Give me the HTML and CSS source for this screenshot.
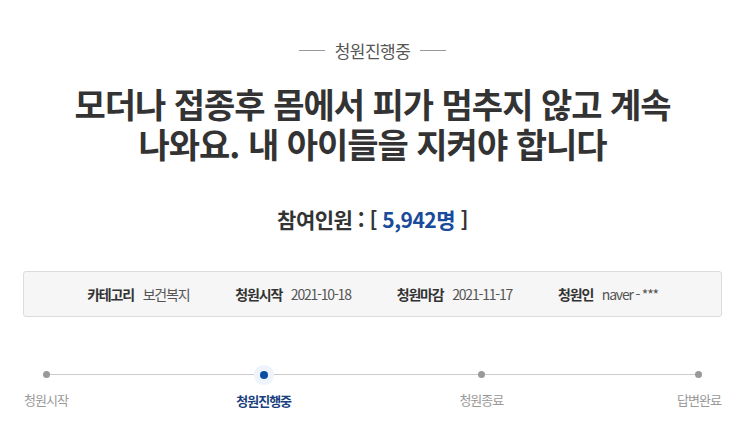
FILE: index.html
```html
<!DOCTYPE html>
<html lang="ko">
<head>
  <meta charset="UTF-8">
  <meta name="viewport" content="width=device-width, initial-scale=1.0">
  <title>청원진행중</title>
  <link rel="stylesheet" href="styles.css">
</head>
<body>
  <div class="petition">
    <!-- Status header -->
    <div class="status">
      <span class="status-line"></span>
      <span class="status-text">청원진행중</span>
      <span class="status-line"></span>
    </div>

    <h1 class="title">
      <span class="title-line">모더나 접종후 몸에서 피가 멈추지 않고 계속</span>
      <span class="title-line">나와요. 내 아이들을 지켜야 합니다</span>
    </h1>

    <h2 class="count">참여인원 : [ <span class="count-num">5,942명</span> ]</h2>

    <!-- Petition info -->
    <ul class="info">
      <li><strong>카테고리</strong> 보건복지</li>
      <li><strong>청원시작</strong> 2021-10-18</li>
      <li><strong>청원마감</strong> 2021-11-17</li>
      <li><strong>청원인</strong> naver - ***</li>
    </ul>

    <!-- Progress steps -->
    <div class="steps">
      <div class="step"><span class="dot"></span><span class="label">청원시작</span></div>
      <div class="step active"><span class="dot"></span><span class="label">청원진행중</span></div>
      <div class="step"><span class="dot"></span><span class="label">청원종료</span></div>
      <div class="step"><span class="dot"></span><span class="label">답변완료</span></div>
    </div>
  </div>
</body>
</html>
```

FILE: styles.css
```css
/* Petition detail header */
body {
  font-family: "Noto Sans CJK KR", "Noto Sans", sans-serif;
  margin: 0;
  padding: 0;
  background-color: #ffffff;
  color: #333;
}

.petition {
  padding: 36px 23px 0;
}

.status {
  display: flex;
  justify-content: center;
  align-items: center;
  gap: 10px;
  height: 28px;
}

.status-line {
  width: 26px;
  height: 1px;
  background-color: #999;
}

.status-text {
  font-size: 17px;
  color: #555;
  letter-spacing: -0.5px;
}

.title {
  margin: 20px 0 0;
  font-size: 34px;
  font-weight: 700;
  text-align: center;
  letter-spacing: -1px;
  color: #333;
}

.title-line {
  display: block;
  height: 40px;
  line-height: 40px;
}

.count {
  margin: 40px 0 0;
  font-size: 21px;
  line-height: 30px;
  font-weight: 700;
  text-align: center;
  letter-spacing: -0.5px;
  color: #333;
}

.count-num {
  color: #1a4a9b;
}

.info {
  list-style: none;
  margin: 37px 0 0;
  padding: 0;
  height: 44px;
  display: flex;
  justify-content: center;
  align-items: center;
  gap: 46px;
  background-color: #f6f6f6;
  border: 1px solid #dcdcdc;
  border-radius: 3px;
  font-size: 14px;
  color: #555;
  letter-spacing: -1.2px;
}

.info strong {
  color: #333;
  margin-right: 6px;
}

.steps {
  position: relative;
  display: flex;
  justify-content: space-between;
  margin-top: 51px;
}

.steps::before {
  content: "";
  position: absolute;
  left: 22px;
  right: 24px;
  top: 6px;
  height: 1px;
  background-color: #ccc;
}

.step {
  display: flex;
  flex-direction: column;
  align-items: center;
  width: 46px;
  position: relative;
}

.dot {
  width: 7px;
  height: 7px;
  margin: 3px 0;
  border-radius: 50%;
  background-color: #999;
}

.active .dot {
  width: 8px;
  height: 8px;
  background-color: #0b4ea2;
  box-shadow: 0 0 0 6px #eef4fc;
}

.label {
  margin-top: 9px;
  font-size: 13px;
  color: #999;
  letter-spacing: -1px;
  white-space: nowrap;
}

.active .label {
  color: #1a3f7e;
  font-weight: 700;
}
```
